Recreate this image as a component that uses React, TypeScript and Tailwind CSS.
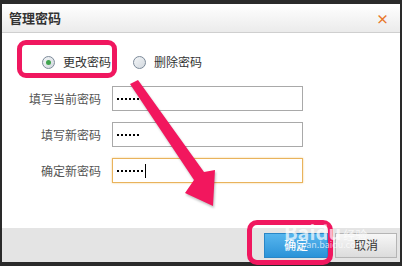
import React from 'react';

const font = { fontFamily: '"Noto Sans CJK SC", "Liberation Sans", sans-serif' };

function Radio({ checked }: { checked?: boolean }) {
  return (
    <span className="w-[13px] h-[13px] rounded-full border border-[#7c8a99] bg-gradient-to-br from-[#f4f6f8] to-[#d2d8de] flex items-center justify-center">
      {checked && <span className="w-[5px] h-[5px] rounded-full bg-[#3fa34d]" />}
    </span>
  );
}

function PasswordRow({ label, dots, focused }: { label: string; dots: number; focused?: boolean }) {
  return (
    <div className="flex items-center h-[25px]">
      <span className="w-[99px] text-right text-[12px] text-[#555] pr-0">{label}</span>
      <div
        className={
          focused
            ? 'ml-[11px] w-[191px] h-[25px] border border-[#e9b35c] shadow-[0_0_2px_#f3cf8f] bg-white flex items-center pl-[4px]'
            : 'ml-[11px] w-[191px] h-[25px] border border-[#a9a9a9] bg-white flex items-center pl-[4px]'
        }
      >
        <span className="flex gap-[2px]">
          {Array.from({ length: dots }).map((_, i) => (
            <span key={i} className="w-[2px] h-[2px] bg-black" />
          ))}
        </span>
        {focused && <span className="ml-[2px] w-px h-[14px] bg-black" />}
      </div>
    </div>
  );
}

export default function App() {
  return (
    <div className="w-[402px] h-[266px] bg-[#2a2a2a] pt-[4px] px-[2px] pb-[4px] overflow-hidden" style={font}>
      <div className="relative w-full h-full flex flex-col bg-white">
        {/* title bar */}
        <div className="h-[29px] flex items-center justify-between px-[7px] bg-gradient-to-b from-white to-[#ebebeb] border-b border-[#cfcfcf]">
          <span className="text-[13px] font-bold text-[#333]">管理密码</span>
          <span className="text-[13px] font-bold text-[#e8782a] mr-[4px] leading-none">×</span>
        </div>

        {/* body */}
        <div className="flex-1 pl-[31px] pt-[21px]">
          <div className="flex items-center h-[16px] pl-[9px] text-[12px] text-[#333]">
            <Radio checked />
            <span className="ml-[8px]">更改密码</span>
            <span className="ml-[22px]"><Radio /></span>
            <span className="ml-[8px]">删除密码</span>
          </div>
          <div className="mt-[16px] flex flex-col gap-[11px] -ml-[31px] pl-[0px]">
            <PasswordRow label="填写当前密码" dots={6} />
            <PasswordRow label="填写新密码" dots={6} />
            <PasswordRow label="确定新密码" dots={7} focused />
          </div>
        </div>

        {/* footer */}
        <div className="h-[34px] bg-[#e4e4e4] flex items-center justify-end gap-[7px] pr-[3px]">
          <button className="w-[64px] h-[25px] bg-gradient-to-b from-[#56b5ee] to-[#2a93d8] text-white text-[12px] border border-[#2a86c6]">
            确定
          </button>
          <button className="w-[62px] h-[25px] bg-gradient-to-b from-[#f7f7f7] to-[#dcdcdc] text-[#333] text-[12px] border border-[#b5b5b5]">
            取消
          </button>
        </div>

        {/* annotations */}
        <div className="absolute left-[15px] top-[36px] w-[100px] h-[38px] border-[5px] border-[#f0175f] rounded-[9px]" />
        <div className="absolute left-[245px] top-[216px] w-[86px] h-[45px] border-[5px] border-[#f0175f] rounded-[10px]" />
        <div className="absolute left-[282px] top-[218px] text-white/70 leading-none pointer-events-none">
          <span className="text-[20px] font-bold">Baidu</span>
          <span className="text-[12px] ml-[2px]">经验</span>
          <div className="text-[9px] -mt-[2px] ml-[2px]">jingyan.baidu.com</div>
        </div>
        <svg className="absolute left-0 top-0 pointer-events-none" width="398" height="258">
          <polygon
            points="128,80 136,76 202,168 213,166 211,202 183,189 192,176"
            fill="#f2175e"
            style={{ filter: 'drop-shadow(1px 2px 1px rgba(0,0,0,0.25))' }}
          />
        </svg>
      </div>
    </div>
  );
}
